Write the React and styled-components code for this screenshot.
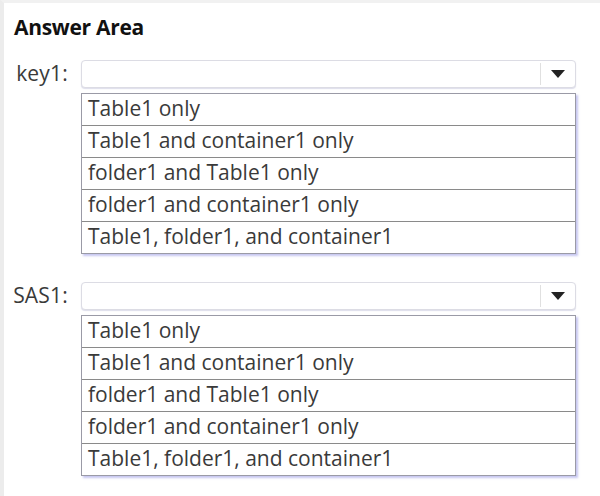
import styled, { createGlobalStyle } from "styled-components";

const questions = [
    { label: "key1:", options: ["Table1 only", "Table1 and container1 only", "folder1 and Table1 only", "folder1 and container1 only", "Table1, folder1, and container1"] },
    { label: "SAS1:", options: ["Table1 only", "Table1 and container1 only", "folder1 and Table1 only", "folder1 and container1 only", "Table1, folder1, and container1"] }
];

export default function App() {
    return (
        <Page>
            <GlobalStyle />
            <Title>Answer Area</Title>

            {questions.map((q) => (
                <Question key={q.label}>
                    <Label>{q.label}</Label>
                    <Field>
                        <Select>
                            <SelectValue />
                            <ArrowBox>
                                <svg width="14" height="8" viewBox="0 0 14 8">
                                    <path d="M0 0 L14 0 L7 8 Z" fill="#222" />
                                </svg>
                            </ArrowBox>
                        </Select>
                        <List>
                            {q.options.map((option) => (
                                <Option key={option}>{option}</Option>
                            ))}
                        </List>
                    </Field>
                </Question>
            ))}
        </Page>
    );
}

const GlobalStyle = createGlobalStyle`
    html, body {
        margin: 0;
        padding: 0;
        background: #ffffff;
    }
`;

const Page = styled.div`
    width: 596px;
    height: 493px;

    border-left: 4px solid #ececec;
    border-top: 3px solid #f1f1f1;

    display: flex;
    flex-direction: column;

    font-family: "Open Sans", "Noto Sans", sans-serif;
    color: #333;
    overflow: hidden;
`;

const Title = styled.div`
    margin: 10px 0 0 10px;

    font-size: 21px;
    font-weight: 700;
    line-height: 28px;
    color: #111;
    letter-spacing: -0.3px;
`;

const Question = styled.div`
    display: flex;
    flex-direction: row;
    align-items: flex-start;

    margin-top: 19px;

    & + & {
        margin-top: 28px;
    }
`;

const Label = styled.div`
    width: 64px;
    height: 28px;

    text-align: right;

    font-size: 21px;
    line-height: 26px;
    color: #3a3a3a;
    letter-spacing: 0.2px;
`;

const Field = styled.div`
    width: 495px;
    margin-left: 13px;

    display: flex;
    flex-direction: column;
`;

const Select = styled.div`
    height: 26px;

    display: flex;
    flex-direction: row;

    border: 1px solid #dcdce4;
    border-radius: 4px;
    background: #fff;
    box-shadow: 0 1px 1px rgba(190, 190, 215, 0.5);
`;

const SelectValue = styled.div`
    flex: 1;
`;

const ArrowBox = styled.div`
    width: 34px;

    display: flex;
    align-items: center;
    justify-content: center;

    border-left: 1px solid #e0e0e0;
    margin: 2px 0;
`;

const List = styled.div`
    margin-top: 5px;

    display: flex;
    flex-direction: column;

    border: 1px solid #9a9aa6;
    box-shadow: 2px 2px 2px rgba(160, 160, 230, 0.6);
    background: #fff;
`;

const Option = styled.div`
    box-sizing: border-box;
    height: 31px;
    padding-left: 6px;

    font-size: 21px;
    line-height: 28px;
    color: #3a3a3a;
    white-space: nowrap;

    & + & {
        height: 32px;
        border-top: 1px solid #8a8a8a;
    }
`;
